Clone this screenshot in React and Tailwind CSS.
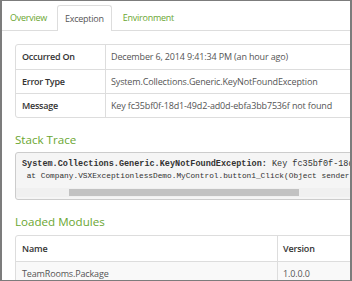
import React from "react";

export default function App() {
  const font = "font-['Open_Sans','Noto_Sans',sans-serif]";
  return (
    <div className={`w-[352px] h-[281px] overflow-hidden bg-white border-t border-b border-l-2 border-r-2 border-[#7c7c7c] ${font} text-[9px] tracking-[-0.15px] text-[#555]`}>
      {/* Tabs */}
      <div className="flex items-end h-[30px] border-b border-[#dddddd] pl-[1px] tracking-[-0.25px]">
        <div className="h-[25px] px-[7px] mr-[3px] flex items-center text-[#6aa631]">Overview</div>
        <div className="h-[26px] px-[7px] mr-[4px] flex items-center bg-white border border-b-0 border-[#dddddd] rounded-t-[3px] -mb-px text-[#555]">Exception</div>
        <div className="h-[25px] px-[7px] flex items-center text-[#6aa631]">Environment</div>
      </div>

      <div className="pl-[13px] pt-[13px] w-[440px]">
        {/* Info table */}
        <div className="border border-[#dddddd] rounded-[3px] overflow-hidden">
          {[
            ["Occurred On", "December 6, 2014 9:41:34 PM (an hour ago)"],
            ["Error Type", "System.Collections.Generic.KeyNotFoundException"],
            ["Message", "Key fc35bf0f-18d1-49d2-ad0d-ebfa3bb7536f not found"],
          ].map(([k, v], i) => (
            <div key={k} className={`flex h-[24px] ${i > 0 ? "border-t border-[#dddddd]" : ""}`}>
              <div className="w-[90px] shrink-0 border-r border-[#dddddd] flex items-center pl-[6px] font-semibold tracking-[-0.25px] text-[#333]">{k}</div>
              <div className="flex items-center pl-[5px] text-[#555] whitespace-nowrap">{v}</div>
            </div>
          ))}
        </div>

        {/* Stack trace */}
        <div className="mt-[12px] h-[19px] flex items-center text-[11.6px] tracking-normal text-[#6aa631] leading-none">Stack Trace</div>
        <div className="mt-[3px] border border-[#cccccc] rounded-[3px] bg-[#f5f5f5] font-['Liberation_Mono',monospace] tracking-normal text-[#333] overflow-hidden">
          <div className="pt-[5px] pl-[6px] whitespace-pre">
            <div className="h-[12px] leading-[12px] text-[8.5px]">
              <span className="font-bold">System.Collections.Generic.KeyNotFoundException:</span>
              <span> Key fc35bf0f-18d1-49d2-ad0d-ebfa3bb7536f not found</span>
            </div>
            <div className="h-[12px] leading-[12px] text-[7.8px]"> at Company.VSXExceptionlessDemo.MyControl.button1_Click(Object sender, EventArgs e)</div>
          </div>
          <div className="mt-[6px] mb-[2px] h-[9px] bg-[#f0f0f0] flex items-center">
            <div className="ml-[53px] w-[230px] h-[7px] bg-[#c2c2c2]" />
          </div>
        </div>

        {/* Loaded modules */}
        <div className="mt-[12px] h-[19px] flex items-center text-[11.6px] tracking-normal text-[#6aa631] leading-none">Loaded Modules</div>
        <div className="mt-[4px] border border-[#dddddd] rounded-[3px] overflow-hidden">
          <div className="flex h-[25px]">
            <div className="w-[262px] shrink-0 border-r border-[#dddddd] flex items-center pl-[6px] font-semibold text-[#333]">Name</div>
            <div className="flex items-center pl-[5px] font-semibold text-[#333]">Version</div>
          </div>
          <div className="flex h-[24px] border-t border-[#dddddd] bg-[#f9f9f9]">
            <div className="w-[262px] shrink-0 border-r border-[#dddddd] flex items-center pl-[6px]">TeamRooms.Package</div>
            <div className="flex items-center pl-[5px]">1.0.0.0</div>
          </div>
        </div>
      </div>
    </div>
  );
}
